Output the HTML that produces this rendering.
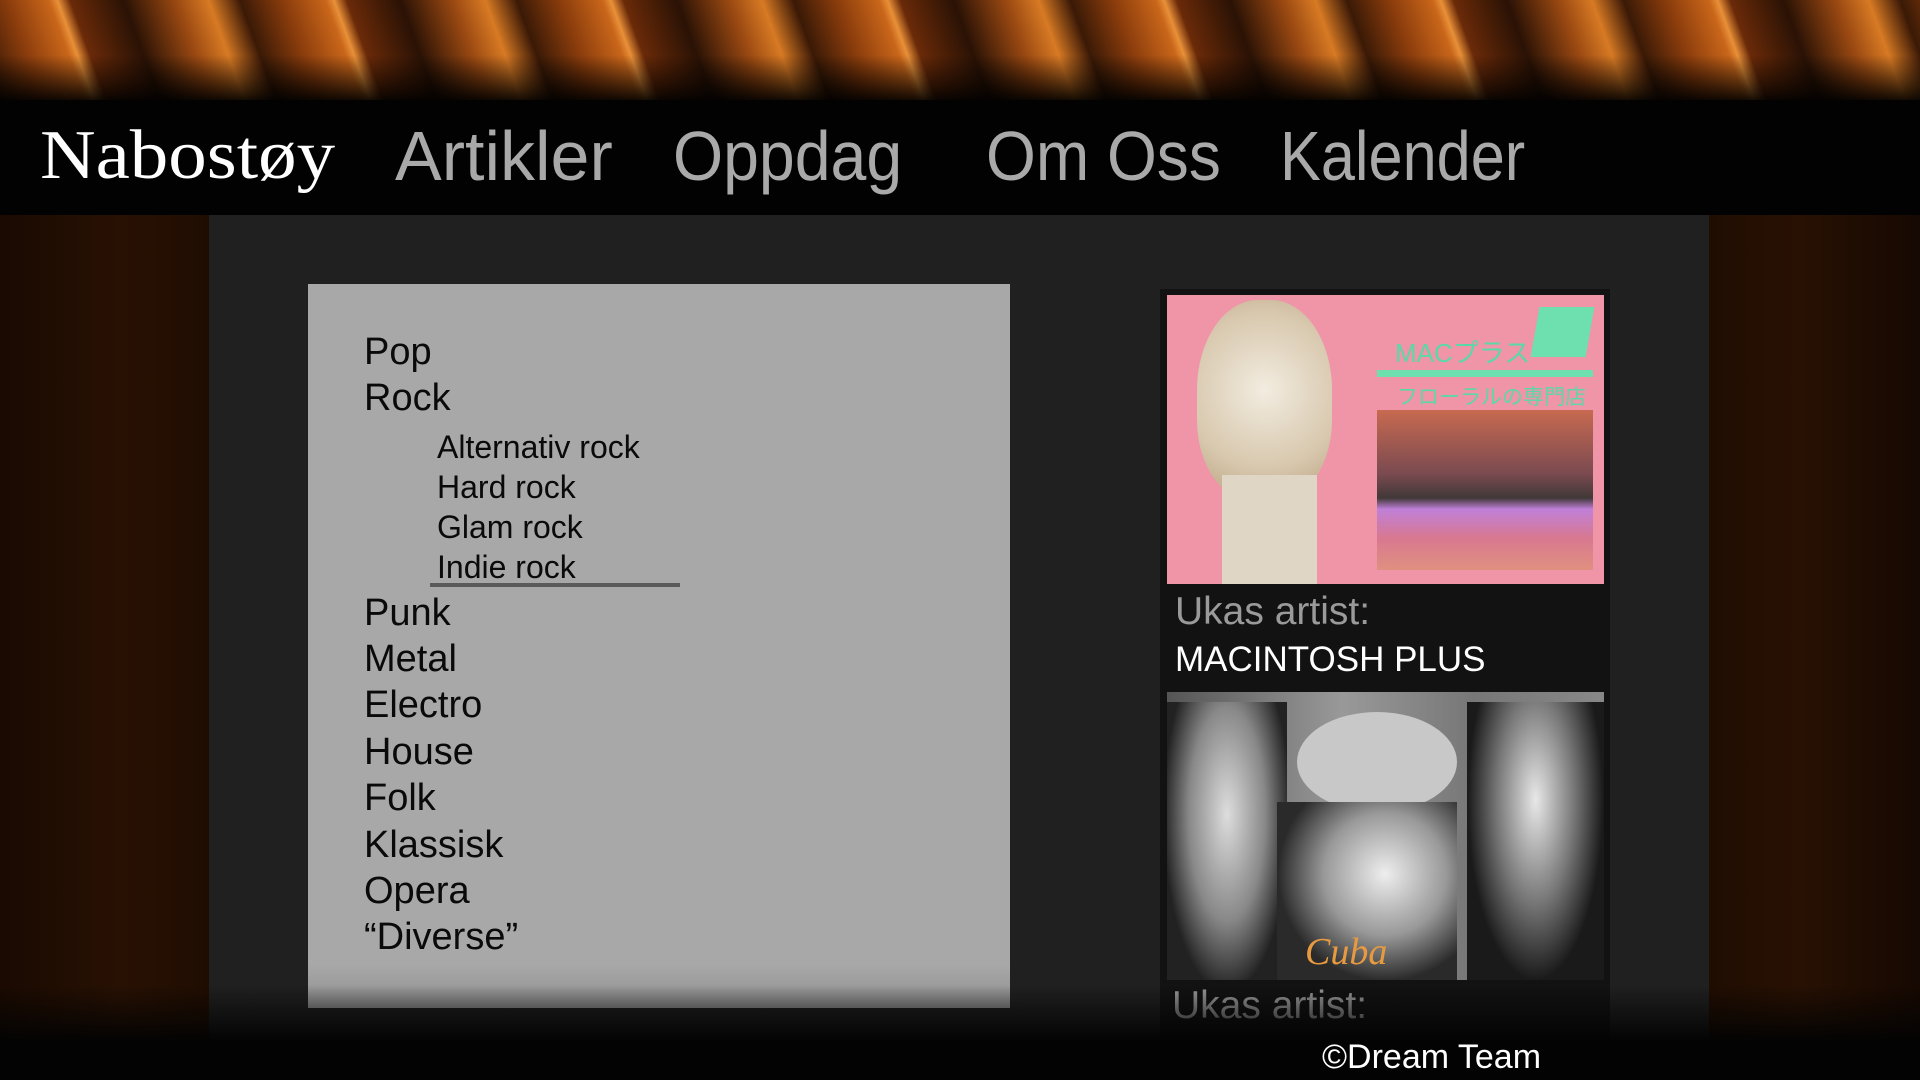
<!DOCTYPE html>
<html><head><meta charset="utf-8"><style>
*{margin:0;padding:0;box-sizing:border-box}
body{width:1920px;height:1080px;overflow:hidden;background:#000;position:relative;font-family:"Liberation Sans","Noto Sans CJK JP",sans-serif}
.abs{position:absolute}
#hdr{left:0;top:0;width:1920px;height:100px;background:
linear-gradient(180deg,rgba(0,0,0,0) 55%,rgba(0,0,0,.9) 100%),
repeating-linear-gradient(70deg,#3a1a06 0,#8a3c0c 40px,#c9661a 80px,#e89038 88px,#6a2a08 100px,#2a1205 150px,#9c4a12 200px,#d77a24 230px,#3a1806 260px);}
#nav{left:0;top:100px;width:1920px;height:115px;background:#020202}
.n{position:absolute;top:116px;font-size:70px;line-height:80px;color:#a9a9a9;transform-origin:0 0;white-space:nowrap}
#side{left:0;top:215px;width:1920px;height:865px;background:linear-gradient(90deg,#1a0a02 0,#281103 120px,#200d02 209px,#200d02 1709px,#281103 1800px,#160802 1920px)}
#mid{left:209px;top:215px;width:1500px;height:865px;background:#202020}
#fade{left:0;top:985px;width:1920px;height:95px;background:linear-gradient(180deg,rgba(0,0,0,0),#030303 60%,#030303)}
#box{left:308px;top:284px;width:702px;height:724px;background:linear-gradient(180deg,#a8a8a8 0,#a8a8a8 94%,#909090 100%)}
.m{position:absolute;left:364px;font-size:38px;color:#0a0a0a;line-height:1}
.s{position:absolute;left:437px;font-size:32px;color:#0a0a0a;line-height:1}
#rp{left:1160px;top:289px;width:450px;height:760px;background:#121212}
#img1{left:1167px;top:295px;width:437px;height:289px;background:#f094a8;overflow:hidden}
#img2{left:1167px;top:692px;width:437px;height:288px;overflow:hidden;background:linear-gradient(90deg,#555,#999 40%,#777 70%,#888)}
.u{position:absolute;font-size:39px;color:#9a9a9a}
</style></head><body>
<div id="hdr" class="abs"></div>
<div id="nav" class="abs"></div>
<div class="n" style="left:40px;color:#fff;font-family:'Liberation Serif',serif;transform:scaleX(1.1)">Nabostøy</div>
<div class="n" style="left:395px">Artikler</div>
<div class="n" style="left:673px;transform:scaleX(.92)">Oppdag</div>
<div class="n" style="left:986px;transform:scaleX(.915)">Om Oss</div>
<div class="n" style="left:1280px;transform:scaleX(.875)">Kalender</div>
<div id="side" class="abs"></div>
<div id="mid" class="abs"></div>
<div id="box" class="abs"></div>
<div class="m" style="top:333px">Pop</div>
<div class="m" style="top:379px">Rock</div>
<div class="s" style="top:431px">Alternativ rock</div>
<div class="s" style="top:471px">Hard rock</div>
<div class="s" style="top:511px">Glam rock</div>
<div class="s" style="top:551px">Indie rock</div>
<div class="abs" style="left:430px;top:583px;width:250px;height:4px;background:#5a5a5a"></div>
<div class="m" style="top:594px">Punk</div>
<div class="m" style="top:640px">Metal</div>
<div class="m" style="top:686px">Electro</div>
<div class="m" style="top:733px">House</div>
<div class="m" style="top:779px">Folk</div>
<div class="m" style="top:826px">Klassisk</div>
<div class="m" style="top:872px">Opera</div>
<div class="m" style="top:918px">“Diverse”</div>
<div id="rp" class="abs"></div>
<div id="img1" class="abs">
<div class="abs" style="left:30px;top:5px;width:135px;height:200px;border-radius:45% 45% 40% 40%;background:radial-gradient(circle at 50% 45%,#f2ece0,#d8c8ae 60%,#b8a07e)"></div>
<div class="abs" style="left:55px;top:180px;width:95px;height:110px;background:#e0d6c6"></div>
<div class="abs" style="left:210px;top:75px;width:216px;height:7px;background:#6ee0b0"></div>
<div class="abs" style="left:228px;top:38px;font-size:26px;color:#5cd8a8">MACプラス</div>
<div class="abs" style="left:368px;top:12px;width:55px;height:50px;background:#6ee0b0;transform:skewX(-10deg)"></div>
<div class="abs" style="left:230px;top:86px;font-size:21px;color:#5cd8a8">フローラルの専門店</div>
<div class="abs" style="left:210px;top:115px;width:216px;height:160px;background:linear-gradient(180deg,#c86a50 0,#7a4a50 40%,#403838 55%,#c080d8 62%,#d87890 80%,#e09080)"></div>
</div>
<div class="u" style="left:1175px;top:590px">Ukas artist:</div>
<div class="u" style="left:1175px;top:640px;color:#fff;font-size:35px">MACINTOSH PLUS</div>
<div id="img2" class="abs">
<div class="abs" style="left:0;top:10px;width:120px;height:280px;background:radial-gradient(ellipse at 50% 40%,#ddd,#888 45%,#222 75%)"></div>
<div class="abs" style="left:130px;top:20px;width:160px;height:100px;border-radius:50%;background:#c8c8c8"></div>
<div class="abs" style="left:110px;top:110px;width:180px;height:180px;background:radial-gradient(ellipse at 60% 40%,#eee,#999 40%,#2a2a2a 70%)"></div>
<div class="abs" style="left:300px;top:10px;width:137px;height:280px;background:radial-gradient(ellipse at 50% 35%,#e8e8e8,#777 40%,#1a1a1a 70%)"></div>
<div class="abs" style="left:138px;top:238px;font-size:38px;font-style:italic;font-family:'Liberation Serif',serif;color:#e89a40">Cuba</div>
</div>
<div class="u" style="left:1172px;top:984px">Ukas artist:</div>
<div id="fade" class="abs"></div>
<div class="abs" style="left:1322px;top:1038px;font-size:34px;color:#fff;white-space:nowrap">©Dream Team</div>
</body></html>
